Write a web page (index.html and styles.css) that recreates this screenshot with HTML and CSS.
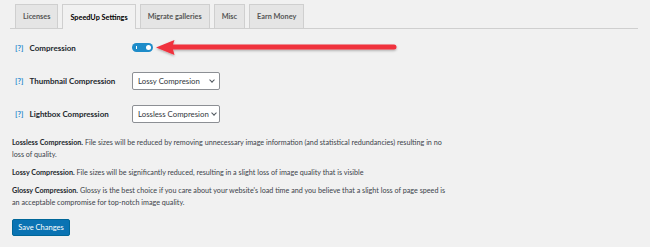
FILE: index.html
```html
<!DOCTYPE html>
<html>
<head>
<meta charset="utf-8">
<link rel="stylesheet" href="styles.css">
</head>
<body>
<div class="wrap">
  <nav class="tabs">
    <span class="tab">Licenses</span>
    <span class="tab active">SpeedUp Settings</span>
    <span class="tab">Migrate galleries</span>
    <span class="tab">Misc</span>
    <span class="tab">Earn Money</span>
  </nav>
  <div class="form">
    <div class="row">
      <div class="label"><span class="help">[?]</span><span class="name">Compression</span></div>
      <div class="field"><span class="toggle"><span class="bar"></span><span class="knob"></span></span></div>
    </div>
    <div class="row">
      <div class="label"><span class="help">[?]</span><span class="name">Thumbnail Compression</span></div>
      <div class="field"><span class="select">Lossy Compresion<span class="chev"></span></span></div>
    </div>
    <div class="row">
      <div class="label"><span class="help">[?]</span><span class="name">Lightbox Compression</span></div>
      <div class="field"><span class="select">Lossless Compresion<span class="chev"></span></span></div>
    </div>
  </div>
  <div class="desc">
    <p><b>Lossless Compression.</b> File sizes will be reduced by removing unnecessary image information (and statistical redundancies) resulting in no<br>loss of quality.</p>
    <p><b>Lossy Compression.</b> File sizes will be significantly reduced, resulting in a slight loss of image quality that is visible</p>
    <p><b>Glossy Compression.</b> Glossy is the best choice if you care about your website's load time and you believe that a slight loss of page speed is<br>an acceptable compromise for top-notch image quality.</p>
  </div>
  <div class="actions"><span class="btn">Save Changes</span></div>
  <svg class="arrow" width="250" height="20" viewBox="0 0 250 20">
    <defs>
      <filter id="sh" x="-10%" y="-50%" width="120%" height="200%">
        <feDropShadow dx="0" dy="1.2" stdDeviation="0.8" flood-color="#000" flood-opacity="0.3"/>
      </filter>
    </defs>
    <g filter="url(#sh)">
      <path d="M1 9.5 L19.5 2 L18 6.5 L239 6.5 Q241.5 6.5 241.5 9 Q241.5 11.5 239 11.5 L18 11.5 L19.5 17 Z" fill="#f0323e"/>
    </g>
  </svg>
</div>
</body>
</html>
```
FILE: styles.css
```css
html, body {
  margin: 0;
  padding: 0;
  background: #f1f1f1;
}
body {
  font-family: "Lato", "Noto Sans", sans-serif;
  color: #23282d;
  width: 650px;
  height: 247px;
  overflow: hidden;
}
.wrap {
  position: relative;
  padding: 4px 12px 0 10px;
}
.tabs {
  display: flex;
  gap: 4px;
  padding-left: 5px;
  border-bottom: 1px solid #cfcfcf;
  height: 24px;
}
.tab {
  display: flex;
  align-items: center;
  height: 23px;
  padding: 0 7px;
  background: #e5e5e5;
  border: 1px solid #cfcfcf;
  border-bottom: none;
  font-size: 7.3px;
  font-weight: 700;
  color: #555;
}
.tab.active {
  background: #f1f1f1;
  color: #000;
  height: 24px;
  margin-bottom: -1px;
}
.form {
  padding-top: 2px;
  padding-left: 5px;
}
.row {
  display: flex;
  align-items: center;
  height: 33px;
}
.label {
  width: 117px;
  display: flex;
  align-items: center;
  gap: 6px;
}
.help {
  color: #2e8ccf;
  font-size: 7.8px;
  font-weight: 700;
}
.name {
  font-size: 8px;
  font-weight: 700;
  color: #23282d;
}
.toggle {
  position: relative;
  display: block;
  width: 21px;
  height: 9px;
  border-radius: 5px;
  background: #1e8cc9;
}
.toggle .bar {
  position: absolute;
  left: 4px;
  top: 3px;
  width: 1px;
  height: 3px;
  background: #fff;
}
.toggle .knob {
  position: absolute;
  right: 2px;
  top: 2px;
  width: 5px;
  height: 5px;
  border-radius: 50%;
  background: #fff;
}
.select {
  display: flex;
  align-items: center;
  justify-content: space-between;
  box-sizing: border-box;
  width: 88px;
  height: 18px;
  padding: 0 5px 0 5px;
  background: #fff;
  border: 1px solid #8c8f94;
  border-radius: 2px;
  font-size: 7.8px;
  color: #32373c;
  white-space: nowrap;
}
.chev {
  width: 3px;
  height: 3px;
  border-right: 1px solid #50575e;
  border-bottom: 1px solid #50575e;
  transform: rotate(45deg);
  margin-top: -2px;
  margin-left: 3px;
  flex: none;
}
.desc {
  padding-top: 7px;
  padding-left: 2px;
}
.desc p {
  margin: 0 0 6px;
  font-size: 7.2px;
  line-height: 12px;
  color: #3c434a;
  width: 480px;
}
.desc b {
  font-weight: 700;
  color: #23282d;
}
.actions {
  display: flex;
  padding-top: 4px;
  padding-left: 2px;
}
.btn {
  display: flex;
  align-items: center;
  justify-content: center;
  width: 58px;
  height: 17px;
  background: #0a73b3;
  border: 1px solid #006799;
  border-radius: 2px;
  color: #fff;
  font-size: 7.5px;
  font-weight: 400;
  box-sizing: border-box;
}
.arrow {
  position: absolute;
  left: 155px;
  top: 38px;
}
```
